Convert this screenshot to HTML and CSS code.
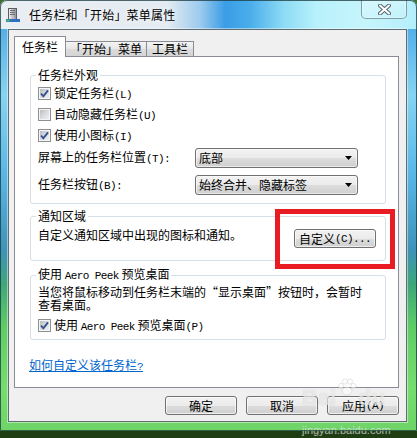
FILE: index.html
```html
<!DOCTYPE html>
<html lang="zh-CN">
<head>
<meta charset="utf-8">
<title>任务栏和「开始」菜单属性</title>
<link rel="stylesheet" href="styles.css">
</head>
<body>
<div class="window">
  <div class="titlebar">
    <svg class="app-icon" width="16" height="16" viewBox="0 0 16 16">
      <defs>
        <linearGradient id="ig" x1="0" y1="0" x2="1" y2="0">
          <stop offset="0" stop-color="#f4f4f4"/>
          <stop offset="1" stop-color="#8c8f94"/>
        </linearGradient>
      </defs>
      <rect x="3.5" y="1.5" width="8" height="11" fill="url(#ig)" stroke="#5a5e64"/>
      <rect x="5" y="3" width="5" height="1" fill="#6a6e74"/>
      <rect x="5" y="5" width="5" height="1" fill="#6a6e74"/>
      <rect x="5" y="7" width="5" height="1" fill="#6a6e74"/>
      <rect x="1" y="12" width="14" height="3" fill="#2f6fc0"/>
      <rect x="1.5" y="12.5" width="3" height="2" fill="#4cc24c"/>
    </svg>
    <span class="title">任务栏和「开始」菜单属性</span>
    <div class="close">
      <svg width="13" height="11" viewBox="0 0 13 11">
        <path d="M2 1.5 L11 9.5 M11 1.5 L2 9.5" stroke="#59636d" stroke-width="4" stroke-linecap="round"/>
        <path d="M2 1.5 L11 9.5 M11 1.5 L2 9.5" stroke="#ffffff" stroke-width="2" stroke-linecap="round"/>
      </svg>
    </div>
  </div>
  <div class="frame">
    <div class="client">
      <div class="tabs">
        <div class="tab active">任务栏</div>
        <div class="tab t2">「开始」菜单</div>
        <div class="tab t3">工具栏</div>
      </div>
      <div class="panel">
        <fieldset class="group g1">
          <legend>任务栏外观</legend>
          <div class="g1-body">
            <div class="check-row first">
              <span class="cb"><svg width="11" height="11" viewBox="0 0 11 11"><path d="M2 5.5 L4.3 8.3 L9 2.3" fill="none" stroke="#34508e" stroke-width="1.9"/></svg></span>
              <span>锁定任务栏<span class="en">(L)</span></span>
            </div>
            <div class="check-row">
              <span class="cb"></span>
              <span>自动隐藏任务栏<span class="en">(U)</span></span>
            </div>
            <div class="check-row">
              <span class="cb"><svg width="11" height="11" viewBox="0 0 11 11"><path d="M2 5.5 L4.3 8.3 L9 2.3" fill="none" stroke="#34508e" stroke-width="1.9"/></svg></span>
              <span>使用小图标<span class="en">(I)</span></span>
            </div>
            <div class="select-row first">
              <span class="select-label">屏幕上的任务栏位置<span class="en">(T):</span></span>
              <div class="select"><span>底部</span><svg class="arrow" width="7" height="4" viewBox="0 0 7 4"><polygon points="0,0 7,0 3.5,4" fill="#000"/></svg></div>
            </div>
            <div class="select-row">
              <span class="select-label">任务栏按钮<span class="en">(B):</span></span>
              <div class="select"><span>始终合并、隐藏标签</span><svg class="arrow" width="7" height="4" viewBox="0 0 7 4"><polygon points="0,0 7,0 3.5,4" fill="#000"/></svg></div>
            </div>
          </div>
        </fieldset>

        <fieldset class="group g2">
          <legend>通知区域</legend>
          <div class="g2-body">
            <span class="g2-text">自定义通知区域中出现的图标和通知。</span>
            <div class="btn customize">自定义<span class="en">(C)...</span></div>
          </div>
        </fieldset>

        <fieldset class="group g3">
          <legend>使用 <span class="en">Aero Peek</span> 预览桌面</legend>
          <div class="g3-body">
            <p class="desc">当您将鼠标移动到任务栏末端的“显示桌面”按钮时，会暂时<br>查看桌面。</p>
            <div class="check-row peek">
              <span class="cb"><svg width="11" height="11" viewBox="0 0 11 11"><path d="M2 5.5 L4.3 8.3 L9 2.3" fill="none" stroke="#34508e" stroke-width="1.9"/></svg></span>
              <span>使用 <span class="en">Aero Peek</span> 预览桌面<span class="en">(P)</span></span>
            </div>
          </div>
        </fieldset>

        <a class="help-link" href="#">如何自定义该任务栏<span class="en">?</span></a>
      </div>
      <div class="buttons">
        <div class="btn dlg">确定</div>
        <div class="btn dlg">取消</div>
        <div class="btn dlg">应用<span class="en">(A)</span></div>
      </div>
    </div>
  </div>
  <div class="highlight"></div>
  <div class="watermark">
    <div class="wm-logo">Bai<svg class="paw" width="20" height="18" viewBox="0 0 20 18"><circle cx="4" cy="8" r="2.6"/><circle cx="8" cy="3.5" r="2.6"/><circle cx="13" cy="3.5" r="2.6"/><circle cx="16.5" cy="8" r="2.6"/><ellipse cx="10" cy="13" rx="5" ry="4"/></svg>du</div>
    <div class="wm-url">jingyan.baidu.com</div>
  </div>
</div>
</body>
</html>
```

FILE: styles.css
```css
* { box-sizing: border-box; }

html, body {
  margin: 0;
  padding: 0;
}

body {
  width: 417px;
  height: 438px;
  overflow: hidden;
  background: linear-gradient(to bottom, #3b6f2a, #1e3d12);
  font-family: "Noto Sans CJK SC", "Noto Sans", sans-serif;
  font-size: 12px;
  color: #000;
}

.en {
  font-family: "Liberation Mono", monospace;
  font-size: 11px;
  letter-spacing: -0.6px;
}

.window {
  position: relative;
  width: 417px;
  height: 431px;
  display: flex;
  flex-direction: column;
  border-radius: 7px 7px 0 0;
  background: linear-gradient(to bottom,
    #3f9fe2 0%, #86d4f2 22%, #5ab8e6 40%, #3f93b8 58%,
    #3ea77a 66%, #5fcd66 76%, #76dd6f 90%, #6ed468 100%);
}

.window::after {
  content: "";
  position: absolute;
  inset: 0;
  border: 1px solid rgba(25, 55, 60, 0.75);
  border-radius: 7px 7px 0 0;
  pointer-events: none;
}

.titlebar {
  height: 29px;
  display: flex;
  align-items: center;
  padding-left: 5px;
  border-radius: 7px 7px 0 0;
  background: linear-gradient(to right,
    #e9eef3 0%, #e4ebf2 40%, #9ccbee 48%, #3a9de6 54%, #4aaeea 60%,
    #8ddbf5 68%, #b8f1fb 76%, #c6f5fc 88%, #b4eefa 100%);
}

.app-icon {
  flex: none;
  margin-right: 8px;
  margin-top: 1px;
}

.title {
  font-size: 12px;
  line-height: 16px;
  letter-spacing: 0.2px;
  margin-top: 1px;
  text-shadow: 0 0 6px rgba(255, 255, 255, 0.9);
}

.close {
  margin-left: auto;
  margin-right: 10px;
  align-self: flex-start;
  width: 46px;
  height: 19px;
  border: 1px solid rgba(70, 100, 110, 0.6);
  border-top: none;
  border-radius: 0 0 5px 5px;
  background: linear-gradient(to bottom, rgba(255, 255, 255, 0.3), rgba(255, 255, 255, 0.12));
  box-shadow: inset 0 0 0 1px rgba(255, 255, 255, 0.35);
  display: flex;
  align-items: center;
  justify-content: center;
}

.frame {
  flex: 1;
  display: flex;
  padding: 0 11px 9px 8px;
}

.client {
  flex: 1;
  display: flex;
  flex-direction: column;
  background: #f0f0f0;
  border: 1px solid #5d6d72;
  box-shadow: 0 0 0 1px rgba(255, 255, 255, 0.45);
  padding: 6px 7px 0 5px;
}

/* Tabs */
.tabs {
  display: flex;
  align-items: flex-start;
  height: 21px;
  margin-bottom: -1px;
}

.tab {
  height: 15px;
  margin-top: 5px;
  margin-left: -1px;
  border: 1px solid #898c95;
  border-bottom: none;
  background: linear-gradient(to bottom, #f4f4f4, #e6e6e6 50%, #dcdcdc 51%, #d4d4d4);
  line-height: 14px;
  text-align: center;
  white-space: nowrap;
}

.tab.active {
  position: relative;
  z-index: 1;
  margin-top: 0;
  margin-left: 0;
  height: 21px;
  width: 52px;
  padding-top: 2px;
  background: #fff;
  line-height: 16px;
}

.tab.t2 { width: 82px; }
.tab.t3 { width: 48px; }

.panel {
  height: 332px;
  background: #fff;
  border: 1px solid #898c95;
  padding: 11px 12px 0 15px;
}

/* Group boxes */
.group {
  margin: 0;
  padding: 0;
  min-width: 0;
  width: 356px;
  border: 1px solid #d5dfe5;
  border-radius: 3px;
}

.group legend {
  margin-left: 5px;
  padding: 0 2px;
  line-height: 14px;
  font-size: 12px;
}

.g1-body {
  padding: 1px 7px 8px 7px;
}

.check-row {
  height: 21px;
  display: flex;
  align-items: center;
  line-height: 14px;
  white-space: nowrap;
}

.cb {
  flex: none;
  width: 13px;
  height: 13px;
  margin-right: 3px;
  border: 1px solid #8e8f8f;
  background: linear-gradient(135deg, #aeb2b8 0%, #d6d8db 45%, #f3f3f3 100%);
  box-shadow: inset 0 0 0 1px #f6f6f6;
  display: flex;
  align-items: center;
  justify-content: center;
}

.cb svg { display: block; }

.select-row {
  display: flex;
  align-items: center;
  height: 20px;
  margin-top: 7px;
  white-space: nowrap;
}

.select-row.first { margin-top: 2px; }

.select-label {
  width: 157px;
  flex: none;
  line-height: 14px;
}

.select {
  width: 163px;
  height: 20px;
  display: flex;
  align-items: center;
  padding-left: 3px;
  border: 1px solid #707070;
  border-radius: 3px;
  background: linear-gradient(to bottom, #f2f2f2 0%, #ebebeb 50%, #dddddd 51%, #cfcfcf 100%);
  box-shadow: inset 0 0 0 1px rgba(255, 255, 255, 0.6);
  line-height: 14px;
}

.arrow {
  margin-left: auto;
  margin-right: 5px;
  flex: none;
}

.g2 { margin-top: 5px; }

.g2-body {
  display: flex;
  align-items: flex-start;
  padding: 5px 9px 12px 7px;
}

.g2-text {
  line-height: 14px;
  white-space: nowrap;
}

.btn {
  height: 19px;
  display: flex;
  align-items: center;
  justify-content: center;
  border: 1px solid #707070;
  border-radius: 3px;
  background: linear-gradient(to bottom, #f2f2f2 0%, #ebebeb 50%, #dddddd 51%, #cfcfcf 100%);
  box-shadow: inset 0 0 0 1px rgba(255, 255, 255, 0.65);
  line-height: 14px;
  white-space: nowrap;
}

.btn.customize {
  width: 82px;
  margin-left: auto;
  margin-top: 1px;
}

.g3 { margin-top: 6px; }

.g3-body {
  padding: 2px 7px 3px 7px;
}

.desc {
  margin: 0;
  line-height: 13px;
  white-space: nowrap;
}

.check-row.peek { margin-top: 4px; }

.help-link {
  display: block;
  width: max-content;
  margin-top: 18px;
  margin-left: -1px;
  line-height: 14px;
  color: #0066cc;
  text-decoration: underline;
}

.buttons {
  display: flex;
  justify-content: flex-end;
  gap: 9px;
  margin-top: 8px;
}

.btn.dlg { width: 72px; }

/* Annotation overlays */
.highlight {
  position: absolute;
  left: 275px;
  top: 209px;
  width: 120px;
  height: 60px;
  border: 5px solid #e91c24;
  pointer-events: none;
}

.watermark {
  position: absolute;
  left: 302px;
  top: 378px;
  color: rgba(255, 255, 255, 0.6);
  text-shadow: 0 0 1px rgba(120, 120, 120, 0.35);
  pointer-events: none;
}

.wm-logo {
  display: flex;
  align-items: flex-end;
  font-family: "Liberation Sans", Arial, sans-serif;
  font-weight: bold;
  font-size: 22px;
  line-height: 24px;
}

.paw {
  fill: rgba(255, 255, 255, 0.55);
  stroke: rgba(120, 120, 120, 0.3);
  stroke-width: 0.6;
  margin: 0 1px 14px 1px;
}

.wm-url {
  font-family: "Liberation Sans", Arial, sans-serif;
  font-size: 11px;
  line-height: 13px;
  margin-top: 14px;
}
```
